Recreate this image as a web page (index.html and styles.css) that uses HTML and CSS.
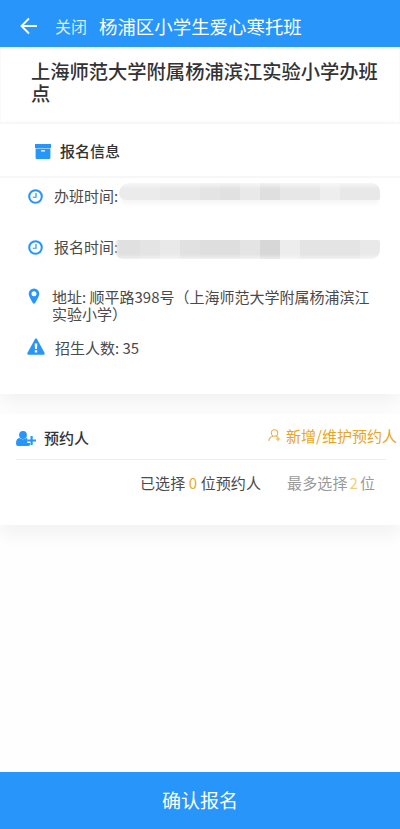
FILE: index.html
```html
<!DOCTYPE html>
<html lang="zh-CN">
<head>
<meta charset="utf-8">
<title>杨浦区小学生爱心寒托班</title>
<link rel="stylesheet" href="styles.css">
</head>
<body>
<div class="page">
  <header class="topbar">
    <svg class="back" viewBox="0 0 18 18"><path d="M17 9H2M9 1.5L1.5 9L9 16.5"/></svg>
    <span class="close">关闭</span>
    <span class="heading">杨浦区小学生爱心寒托班</span>
  </header>
  <section class="school">上海师范大学附属杨浦滨江实验小学办班点</section>
  <section class="card info">
    <h2 class="info-title">
      <svg class="box-icon" viewBox="0 0 16 15"><path d="M0 0h16v4H0z"/><path fill-rule="evenodd" d="M.6 4.600h14.800V14a1 1 0 0 1-1 1H1.600a1 1 0 0 1-1-1zM6 6.200v1.200h4V6.200z"/></svg>
      <span>报名信息</span>
    </h2>
    <div class="row">
      <svg class="clock" viewBox="0 0 16 16"><circle cx="8" cy="8" r="6.700"/><path d="M8.500 4.200V8.800H5"/></svg>
      <span>办班时间:</span><i class="mask mask-a"></i>
    </div>
    <div class="row second">
      <svg class="clock" viewBox="0 0 16 16"><circle cx="8" cy="8" r="6.700"/><path d="M8.500 4.200V8.800H5"/></svg>
      <span>报名时间:</span><i class="mask mask-b"></i>
    </div>
    <div class="row address">
      <svg class="pin" viewBox="0 0 12 16"><path fill-rule="evenodd" d="M6 .5A5.3 5.3 0 0 0 .7 5.8C.7 8 3.300 12.500 4.900 15.100Q6 16.300 7.100 15.100C8.700 12.500 11.300 8 11.300 5.800A5.300 5.300 0 0 0 6 .5M6 3.300a2.500 2.500 0 1 1 0 5a2.500 2.500 0 0 1 0-5"/></svg>
      <span>地址: 顺平路398号（上海师范大学附属杨浦滨江实验小学）</span>
    </div>
    <div class="row quota">
      <svg class="warn" viewBox="0 0 18 17"><path fill-rule="evenodd" d="M8 1Q9-.6 10 1L17.600 15Q18 16.700 16.500 16.700H1.500Q0 16.700.4 15zM7.700 5.500L8 11h2l.3-5.500zM7.800 12.300v2.200h2.400v-2.200z"/></svg>
      <span>招生人数: 35</span>
    </div>
  </section>
  <section class="card people">
    <div class="people-head">
      <svg class="user" viewBox="0 0 20 15"><circle cx="7" cy="4" r="3.900"/><path d="M3.500 7Q7 9.700 10.500 7L11.300 7.300V12H14V14.300Q13 15 12 15H2Q0 15 0 12.500Q0 7.400 3.500 7M14.500 5h2.200v3.400H20v2.100h-3.300V14h-2.200v-3.500H11.500V8.400h3z"/></svg>
      <h2>预约人</h2>
      <a class="add"><svg viewBox="0 0 13 13"><circle cx="6.500" cy="4" r="3.200"/><path d="M.8 12Q1 8.300 5 7.300M8 7.200L9.500 8M10 7.800v4.400M7.800 10h4.400"/></svg><span>新增/维护预约人</span></a>
    </div>
    <div class="counts"><span>已选择 <b>0</b> 位预约人</span><span class="limit">最多选择<b>2</b>位</span></div>
  </section>
  <button class="submit">确认报名</button>
</div>
</body>
</html>
```
FILE: styles.css
```css
* { box-sizing: border-box; }
body { margin: 0; background: #fefefe; font-family: "Noto Sans CJK SC", sans-serif; color: #4a4a4a; }
.page { width: 400px; height: 829px; display: flex; flex-direction: column; overflow: hidden; }
svg { flex: none; fill: #2895fb; }
h2 { margin: 0; font-size: 15px; font-weight: 500; color: #333; }
.topbar { height: 47px; flex: none; display: flex; align-items: center; padding: 5px 0 0 20px; background: #2895fb; color: #fff; white-space: nowrap; }
.back { width: 18px; height: 18px; fill: none; stroke: #fff; stroke-width: 1.9; }
.close { margin-left: 17px; width: 44px; font-size: 16px; color: #d8ecff; }
.heading { font-size: 18.45px; }
.school { height: 77px; flex: none; padding: 13px 20px 0 31px; background: #fff; color: #333; font-size: 19.28px; line-height: 22px; font-weight: 500; box-shadow: inset 0 2px 2px #f0f2f4, inset 0 -2px 2px #f8f8f8; }
.card { flex: none; background: #fff; box-shadow: 0 9px 18px #0000000d; }
.info { height: 270px; }
.info-title { height: 54px; display: flex; align-items: center; gap: 9px; padding-left: 35px; border-bottom: 2px solid #f7f7f7; }
.box-icon { width: 16px; height: 15px; margin-top: 2px; }
.row { display: flex; font-size: 15px; line-height: 17px; padding-left: 28px; }
.row > span { margin-left: 11px; white-space: nowrap; }
.info-title + .row { padding-top: 9px; }
.row.second { padding-top: 34px; }
.clock { width: 15px; height: 15px; margin-top: 2px; fill: none; stroke: #2895fb; stroke-width: 2.2; }
.clock path { stroke-width: 1.3; }
.mask { flex: none; filter: blur(.7px); }
.mask-a { width: 261px; height: 17px; margin-top: -4px; margin-bottom: 4px; margin-left: 1px; border-radius: 12px 10px 2px 8px; background: linear-gradient(#fff9, #fff0 6px), linear-gradient(90deg, #ebebeb 41px, #e8e8e8 41px 61px, #e8e8e8 61px 81px, #e4e4e4 81px 101px, #e1e1e1 101px 121px, #e9e9e9 121px 141px, #dfdfdf 141px 161px, #e7e7e7 161px 201px, #eeeeee 201px 221px, #e8e8e8 221px); box-shadow: -20px 6px 4px -2px #f9f9f900, 0 6px 4px -2px #f6f6f6; }
.mask-b { width: 266px; height: 19px; margin-top: 2px; margin-bottom: -4px; margin-left: -4px; border-radius: 3px 2px 9px 9px; opacity: .93; background: linear-gradient(#fff0 14px, #fff8), linear-gradient(90deg, #ddd0, #dedede 5px 26px, #e2e2e2 26px 46px, #e8e8e8 46px 66px, #dfdfdf 66px 86px, #dcdcdc 86px 126px, #e3e3e3 126px 146px, #d5d5d5 146px 166px, #ececec 166px 186px, #e2e2e2 186px 246px, #e8e8e8 246px); }
.row.address { padding-top: 33px; }
.row.address > span { width: 322px; margin-left: 12px; white-space: normal; }
.pin { width: 12px; height: 16px; }
.row.quota { padding: 17px 0 0 27px; }
.warn { width: 18px; height: 17px; margin-top: -1px; }
.row.quota > span { margin-left: 10px; }
.people { height: 111px; margin-top: 20px; }
.people-head { height: 46px; margin: 0 14px 0 16px; display: flex; align-items: center; border-bottom: 1px solid #eee; white-space: nowrap; }
.user { width: 20px; height: 15px; margin-top: 3px; }
.people-head h2 { margin: 2px 0 0 8px; }
.add { display: flex; align-items: center; gap: 5px; margin: -2px -11px 0 auto; color: #e8a522; font-size: 15px; }
.add svg { width: 13px; height: 13px; fill: none; stroke: #e9b254; stroke-width: 1.1; }
.counts { display: flex; padding: 11px 0 0 140px; font-size: 15px; line-height: 24px; white-space: nowrap; }
.counts span { letter-spacing: .1px; }
.counts b { font-weight: 400; color: #e7ae28; }
.limit { margin-left: 26px; color: #999; }
.limit b { margin: 0 2px; color: #eed07c; }
.submit { height: 57px; flex: none; margin-top: auto; border: 0; padding: 0 0 2px; background: #2895fb; color: #fff; font: 19px "Noto Sans CJK SC", sans-serif; }
```
